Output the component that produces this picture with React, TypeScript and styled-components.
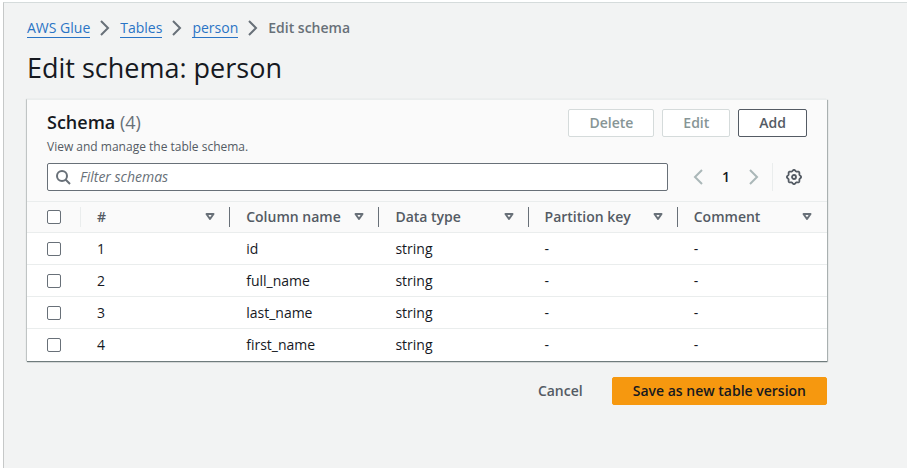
import React from "react";
import styled, { createGlobalStyle } from "styled-components";

const GlobalStyle = createGlobalStyle`
  *, *::before, *::after { box-sizing: border-box; }
  html, body, #root { height: 100%; }
  body {
    margin: 0;
    background: #fff;
    color: #16191f;
    font-family: "Open Sans", "Noto Sans", sans-serif;
    font-size: 14px;
    line-height: 20px;
  }
  button, input { font: inherit; }
`;

const Frame = styled.div`
  min-height: 100%;
  display: flex;
  padding: 2px 2px 2px 3px;
`;

const Page = styled.main`
  flex: 1;
  min-width: 0;
  background: #f2f3f3;
  border-top: 1px solid #d5dbdb;
  border-left: 1px solid #c6c8c8;
  padding: 15px 80px 32px 23px;
`;

const Crumbs = styled.ol`
  display: flex;
  align-items: center;
  gap: 7px;
  height: 20px;
  margin: 0;
  padding: 0;
  list-style: none;
`;

const Crumb = styled.li`
  display: flex;
  align-items: center;
  gap: 7px;
  color: #687078;
`;

const CrumbLink = styled.a`
  color: #2a74c5;
  line-height: 18px;
  text-decoration: none;
  border-bottom: 1px solid #2a74c5;
`;

const Current = styled.span`
  font-weight: 600;
`;

const Title = styled.h1`
  margin: 12px 0 13px;
  font-size: 27px;
  line-height: 36px;
  font-weight: 400;
`;

const Card = styled.section`
  background: #fff;
  border-top: 1px solid #eaeded;
  box-shadow: 0 1px 1px #6f7b7c, 1px 1px 1px #b5bbbb, -1px 0 1px #d0d3d3;
`;

const CardHead = styled.header`
  background: #fafafa;
  padding: 9px 20px 10px;
`;

const HeadRow = styled.div`
  display: flex;
  justify-content: space-between;
  align-items: center;
`;

const Heading = styled.h2`
  margin: 0;
  font-size: 18px;
  line-height: 26px;
  font-weight: 600;
  align-self: flex-start;
`;

const Count = styled.span`
  color: #687078;
  font-weight: 400;
`;

const Hint = styled.p`
  margin: 0 0 6px;
  color: #545b64;
  font-size: 12px;
`;

const Actions = styled.div<{ $gap: number }>`
  display: flex;
  justify-content: flex-end;
  gap: ${(p) => p.$gap}px;
`;

const Button = styled.button<{ $kind?: "normal" | "link" | "primary" }>`
  height: 28px;
  padding: 0 20px;
  border: 1px solid
    ${(p) => (p.$kind === "primary" ? "#f6980f" : p.$kind === "link" ? "transparent" : "#545b64")};
  border-radius: 2px;
  background: ${(p) => (p.$kind === "primary" ? "#f6980f" : p.$kind === "link" ? "transparent" : "#fff")};
  color: ${(p) => (p.$kind === "primary" ? "#16191f" : "#545b64")};
  font-weight: 600;
  line-height: 20px;
  cursor: pointer;
  &:disabled {
    color: #879596;
    border-color: #d5dbdb;
    cursor: default;
  }
`;

const Tools = styled.div`
  display: flex;
  align-items: center;
`;

const Search = styled.label`
  flex: 1;
  display: flex;
  align-items: center;
  gap: 8px;
  height: 28px;
  padding: 0 8px;
  border: 1px solid #687078;
  border-radius: 2px;
  background: #fff;
`;

const SearchInput = styled.input`
  flex: 1;
  min-width: 0;
  padding: 0;
  border: 0;
  outline: 0;
  background: transparent;
  &::placeholder { color: #687078; font-style: italic; opacity: 1; }
`;

const Pager = styled.nav`
  display: flex;
  align-items: center;
  gap: 12px;
  height: 28px;
  margin-left: 22px;
  padding-right: 10px;
  border-right: 1px solid #eaeded;
`;

const IconButton = styled.button`
  display: flex;
  padding: 0;
  border: 0;
  background: transparent;
  color: #545b64;
  cursor: pointer;
  &:disabled { color: #aab7b8; }
`;

const PageNumber = styled.button`
  width: 16px;
  padding: 0;
  border: 0;
  background: transparent;
  color: #16191f;
  font-weight: 600;
`;

const Settings = styled(IconButton)`
  margin: 0 5px 0 13px;
`;

const Table = styled.table`
  width: 100%;
  border-collapse: collapse;
  table-layout: fixed;
`;

const HeadCell = styled.th<{ $select?: boolean }>`
  height: 31px;
  padding: 0;
  width: ${(p) => (p.$select ? "54px" : "auto")};
  background: #fafafa;
  border-top: 1px solid #eaeded;
  border-bottom: 1px solid #eaeded;
  color: #545b64;
  font-weight: 600;
  text-align: left;
`;

const HeadInner = styled.div<{ $edge?: "light" | "dark" }>`
  display: flex;
  align-items: center;
  justify-content: space-between;
  height: 20px;
  padding: 0 14px 0 16px;
  border-right: 1px solid ${(p) => (p.$edge === "dark" ? "#687078" : "transparent")};
`;

const SelectBox = styled.div<{ $edge?: boolean }>`
  display: flex;
  align-items: center;
  height: 20px;
  padding-left: 20px;
  border-right: 1px solid ${(p) => (p.$edge ? "#eaeded" : "transparent")};
`;

const Cell = styled.td`
  height: 32px;
  padding: 0 16px;
  border-bottom: 1px solid #eaeded;
  tr:last-child > & { border-bottom: 0; }
`;

const CheckCell = styled(Cell)`
  padding: 0;
`;

const Check = styled.input`
  appearance: none;
  width: 14px;
  height: 14px;
  margin: 0;
  border: 1px solid #687078;
  border-radius: 2px;
  background: #fff;
  &:checked { background: #2a74c5; }
`;

const Footer = styled.footer`
  margin-top: 16px;
`;

const Chevron = ({ left = false }: { left?: boolean }) => (
  <svg width="16" height="16" viewBox="0 0 16 16" fill="none" stroke="currentColor" strokeWidth="2" aria-hidden="true">
    <path d={left ? "M12 1 5 8l7 7" : "M4 1l7 7-7 7"} />
  </svg>
);

const SearchIcon = () => (
  <svg width="16" height="16" viewBox="0 0 16 16" fill="none" stroke="#687078" strokeWidth="2" aria-hidden="true">
    <circle cx="6" cy="7" r="5" />
    <path d="m9.500 10.500 4.500 4.500" />
  </svg>
);

const SortIcon = () => (
  <svg width="10" height="8" viewBox="0 0 10 8" fill="none" stroke="#687078" strokeWidth="2" strokeLinejoin="round" aria-hidden="true">
    <path d="M1.500 1h7L5 6z" />
  </svg>
);

const gearOutline = Array.from({ length: 96 }, (_, i) => {
  const a = (i / 96) * Math.PI * 2;
  const r = 6.5 + 0.6 * Math.cos(8 * a);
  return `${(8 + r * Math.cos(a)).toFixed(2)},${(8 + r * Math.sin(a)).toFixed(2)}`;
}).join(" ");

const GearIcon = () => (
  <svg width="16" height="16" viewBox="0 0 16 16" fill="none" stroke="currentColor" strokeLinejoin="round" aria-hidden="true">
    <polygon points={gearOutline} strokeWidth="1.800" />
    <circle cx="8" cy="8" r="2" strokeWidth="1.800" />
  </svg>
);

const columns = ["#", "Column name", "Data type", "Partition key", "Comment"];
const rows = ["id", "full_name", "last_name", "first_name"];

export default function App() {
  return (
    <>
      <GlobalStyle />
      <Frame>
        <Page>
          <nav aria-label="Breadcrumbs">
            <Crumbs>
              {["AWS Glue", "Tables", "person"].map((name) => (
                <Crumb key={name}>
                  <CrumbLink href="#">{name}</CrumbLink>
                  <Chevron />
                </Crumb>
              ))}
              <Crumb><Current aria-current="page">Edit schema</Current></Crumb>
            </Crumbs>
          </nav>
          <Title>Edit schema: person</Title>
          <Card>
            <CardHead>
              <HeadRow>
                <Heading>Schema <Count>(4)</Count></Heading>
                <Actions $gap={8}>
                  <Button disabled>Delete</Button>
                  <Button disabled>Edit</Button>
                  <Button>Add</Button>
                </Actions>
              </HeadRow>
              <Hint>View and manage the table schema.</Hint>
              <Tools>
                <Search>
                  <SearchIcon />
                  <SearchInput type="text" placeholder="Filter schemas" aria-label="Filter schemas" />
                </Search>
                <Pager aria-label="Pagination">
                  <IconButton disabled aria-label="Previous page"><Chevron left /></IconButton>
                  <PageNumber>1</PageNumber>
                  <IconButton disabled aria-label="Next page"><Chevron /></IconButton>
                </Pager>
                <Settings aria-label="Preferences"><GearIcon /></Settings>
              </Tools>
            </CardHead>
            <Table>
              <thead>
                <tr>
                  <HeadCell $select>
                    <SelectBox $edge><Check type="checkbox" aria-label="Select all" /></SelectBox>
                  </HeadCell>
                  {columns.map((name, i) => (
                    <HeadCell key={name} scope="col">
                      <HeadInner $edge={i < columns.length - 1 ? "dark" : undefined}>
                        {name}
                        <SortIcon />
                      </HeadInner>
                    </HeadCell>
                  ))}
                </tr>
              </thead>
              <tbody>
                {rows.map((name, i) => (
                  <tr key={name}>
                    <CheckCell>
                      <SelectBox><Check type="checkbox" aria-label={`Select ${name}`} /></SelectBox>
                    </CheckCell>
                    <Cell>{i + 1}</Cell>
                    <Cell>{name}</Cell>
                    <Cell>string</Cell>
                    <Cell>-</Cell>
                    <Cell>-</Cell>
                  </tr>
                ))}
              </tbody>
            </Table>
          </Card>
          <Footer>
            <Actions $gap={8}>
              <Button $kind="link">Cancel</Button>
              <Button $kind="primary">Save as new table version</Button>
            </Actions>
          </Footer>
        </Page>
      </Frame>
    </>
  );
}
